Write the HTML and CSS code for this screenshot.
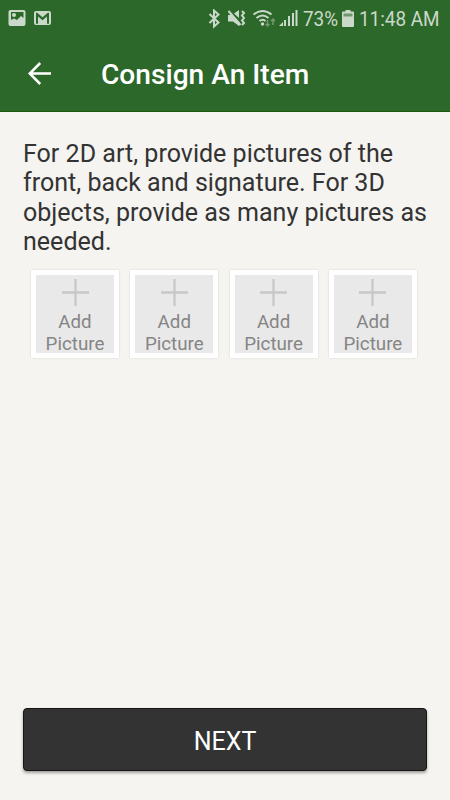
FILE: index.html
```html
<!DOCTYPE html>
<html lang="en">
<head>
	<meta charset="UTF-8">
	<title>Consign An Item</title>
<link rel="stylesheet" href="styles.css">
</head>
<body>
<div class="screen">
  <div class="status">
    <svg class="notes" width="44" height="20" viewBox="0 0 44 20">
      <path fill-rule="evenodd" d="M2.500 1h13q2 0 2 2v12q0 2-2 2h-13q-2 0-2-2V3q0-2 2-2zM3 3v8l3-1.500 3 1.500 4-4 2.500 2V3z"/>
      <circle cx="6" cy="6" r="2"/>
      <path fill-rule="evenodd" d="M28 2h13q2 0 2 2v10q0 2-2 2H28q-2 0-2-2V4q0-2 2-2zM28 3.800v11h2V7.500l4.500 3.700 4.500-3.700v7.300h2v-11h-1.200L34.500 8.300 29.200 3.800z"/>
    </svg>
    <svg class="signals" width="92" height="20" viewBox="0 0 92 20">
      <!-- bluetooth -->
      <path class="line" d="M1.500 5l9 8.500-4.500 4V1.500l4.500 4L1.500 14"/>
      <!-- muted speaker -->
      <path d="M20 6h4l8 8-1 3-6-4.500h-5zM26 4.500L31 1v8z"/>
      <path class="line" d="M20.500 2l12 14"/>
      <path class="line" d="M34 2l2 2-2 2.500 2 2.500-2 2.500 2 2.500-2 2"/>
      <!-- wifi -->
      <path class="line" d="M45.500 5.500q9-7 18 0M48.500 9q6-5 12 0M51.500 12q3-2.500 6 0"/>
      <circle cx="54.500" cy="15" r="1.700"/>
      <path class="line dim" d="M59.500 11v6m-2-2l2 2 2-2M65 16v-6m-2 2l2-2 2 2"/>
      <!-- signal bars -->
      <path d="M71 17l4-4v4zM76 11h2v6h-2zM80 7h2v10h-2zM84 4h2v13h-2zM87.500 1h2v16h-2z"/>
    </svg>
    <span class="percent"><span>73%</span></span>
    <svg class="battery" width="12" height="18" viewBox="0 0 12 18">
      <path d="M3.500 0h5v1.500H11q1 0 1 1V16q0 1-1 1H1q-1 0-1-1V2.500q0-1 1-1h2.500z"/>
      <path class="used" d="M1.500 3.500h9v3h-9z"/>
    </svg>
    <span class="clock"><span>11:48 AM</span></span>
  </div>
  <div class="toolbar">
    <svg class="back" width="24" height="24" viewBox="0 0 24 24">
      <path d="M23 11.500H2M12.200 1L1.700 11.500l10.500 10.500"/>
    </svg>
    <h1>Consign An Item</h1>
  </div>
  <div class="content">
    <p>For 2D art, provide pictures of the front, back and signature. For 3D objects, provide as many pictures as needed.</p>
    <div class="pictures">
      <div class="picture">
        <svg width="27" height="27" viewBox="0 0 27 27"><path d="M13.500 0v27M0 13.500h27"/></svg>
        <div class="label">Add Picture</div>
      </div>
      <div class="picture">
        <svg width="27" height="27" viewBox="0 0 27 27"><path d="M13.500 0v27M0 13.500h27"/></svg>
        <div class="label">Add Picture</div>
      </div>
      <div class="picture">
        <svg width="27" height="27" viewBox="0 0 27 27"><path d="M13.500 0v27M0 13.500h27"/></svg>
        <div class="label">Add Picture</div>
      </div>
      <div class="picture">
        <svg width="27" height="27" viewBox="0 0 27 27"><path d="M13.500 0v27M0 13.500h27"/></svg>
        <div class="label">Add Picture</div>
      </div>
    </div>
    <button class="next">NEXT</button>
  </div>
</div>
</body>
</html>
```
FILE: styles.css
```css
*{box-sizing: border-box;}
body{
margin: 0;
font-family: Roboto, sans-serif;
background: #f5f4f0;
}
.screen{
height: 800px;display: flex;flex-direction: column;
overflow: hidden;
}
/* status bar */
.status{
height: 37px;padding: 0 10px 0 8px;
display: flex;align-items: center;
background: #2d682b;color: #cbd9ca;
font-size: 21px;line-height: 36px;
}
.status svg{fill: #cbd9ca;}
.status .line{fill: none;stroke: #cbd9ca;stroke-width: 2;}
.status .dim{stroke: #74996f;stroke-width: 1.5;}
.status .used{fill: #6f966c;}
.signals{margin-left: auto;}
.percent,.clock{white-space: nowrap;}
.percent{width: 34px;margin-left: 3px;}
.clock{width: 81px;margin-left: 5px;}
.percent span,.clock span{
display: inline-block;
transform: scaleX(.9);transform-origin: left;
}
.battery{margin-left: 5px;}
/* toolbar */
.toolbar{
height: 75px;padding-left: 28px;
display: flex;align-items: center;
background: #2d682b;color: #fff;
border-bottom: 1px solid #17580f;
}
.back{fill: none;stroke: #fff;stroke-width: 2.5;}
.toolbar h1{
margin: 0 0 0 49px;
font-size: 28.15px;font-weight: 500;
}
/* content */
.content{
flex: 1;padding: 27px 23px 29px;
display: flex;flex-direction: column;
}
.content p{
margin: 0;
color: #333;font-size: 25.05px;line-height: 29.3px;
}
.pictures{
margin: 14px 0 0 8px;
display: flex;gap: 11.300px;
}
.picture{
width: 88px;height: 88px;padding-top: 4px;
display: flex;flex-direction: column;align-items: center;
border: 5px solid #fff;
background: #e9e9e9;
box-shadow: 0 0 2px rgba(0,0,0,.13);
}
.picture svg{
flex-shrink: 0;
fill: none;stroke: #c8c8c8;stroke-width: 2.3;
}
.label{
margin-top: 5px;
color: #858585;font-size: 18.75px;line-height: 22px;
text-align: center;
}
.next{
height: 63px;margin-top: auto;padding: 3px 0 0;
border: 1px solid #151515;border-radius: 4px;
background: #333;color: #fff;
font-family: inherit;font-size: 25px;
box-shadow: 0 2px 3px rgba(0,0,0,.35);
}
```
